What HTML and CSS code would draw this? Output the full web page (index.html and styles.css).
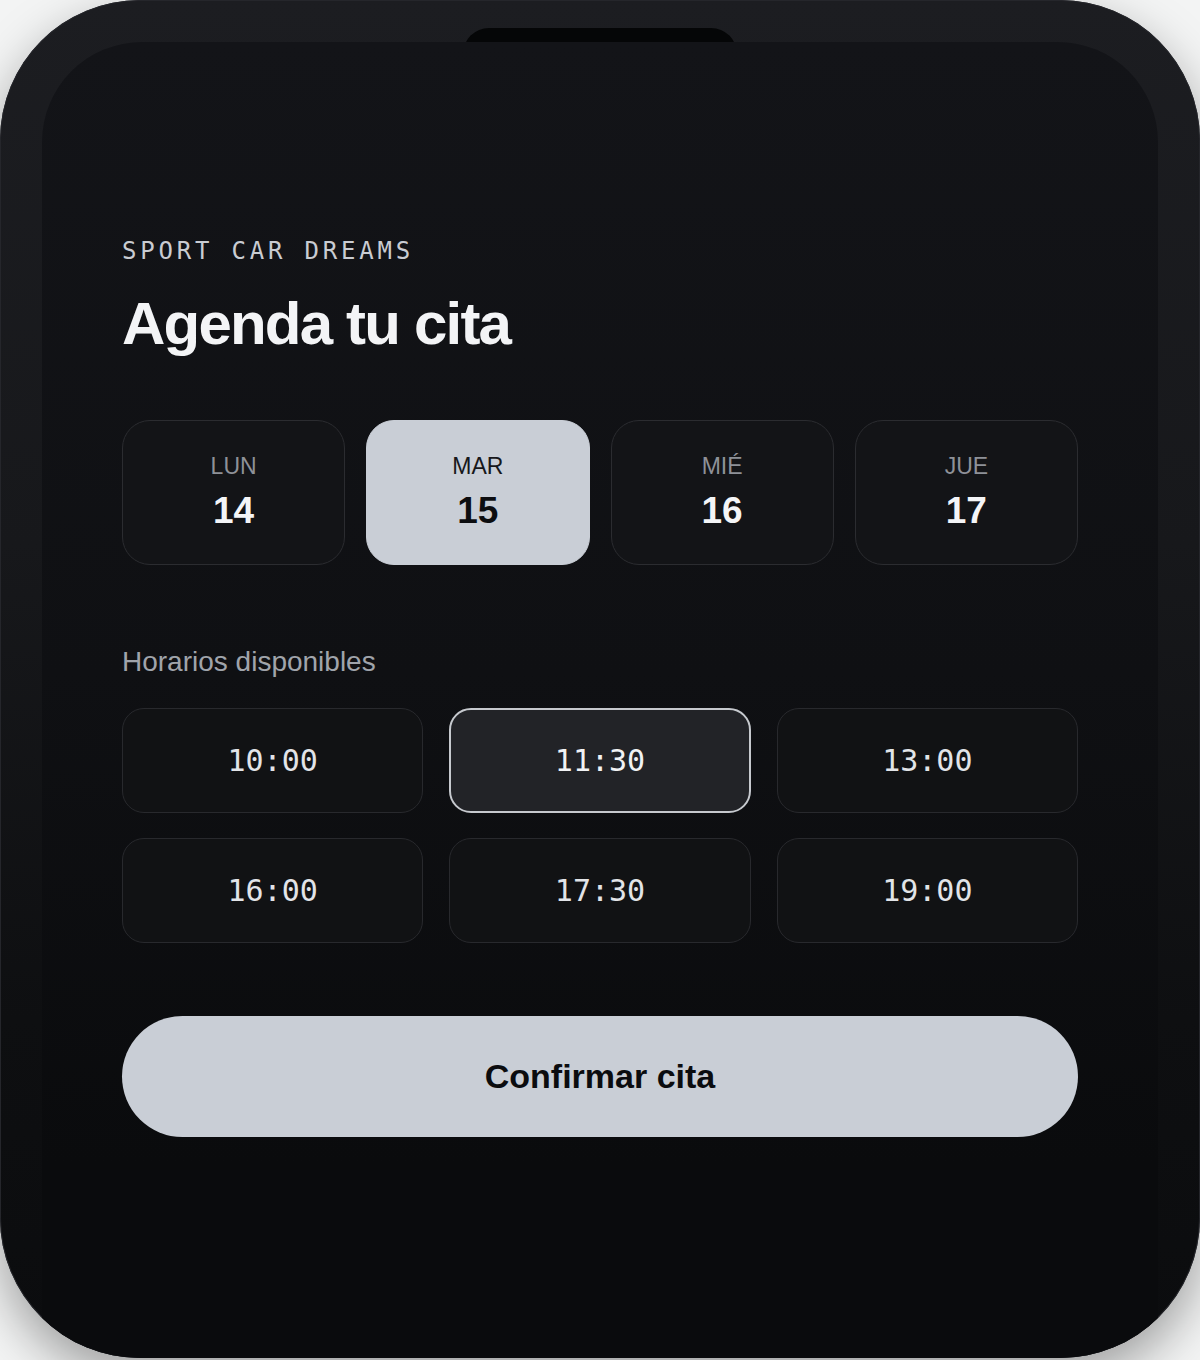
FILE: index.html
```html
<!DOCTYPE html>
<html lang="es">
<head>
<meta charset="utf-8">
<title>Sport Car Dreams - Agenda tu cita</title>
<link rel="stylesheet" href="styles.css">
</head>
<body>
<div class="phone">
  <div class="notch"></div>
  <div class="screen">
    <p class="brand">SPORT CAR DREAMS</p>
    <h1 class="title">Agenda tu cita</h1>

    <div class="dates">
      <button class="date"><span class="dow">LUN</span><span class="day">14</span></button>
      <button class="date is-active"><span class="dow">MAR</span><span class="day">15</span></button>
      <button class="date"><span class="dow">MIÉ</span><span class="day">16</span></button>
      <button class="date"><span class="dow">JUE</span><span class="day">17</span></button>
    </div>

    <p class="section-label">Horarios disponibles</p>

    <div class="slots">
      <button class="slot">10:00</button>
      <button class="slot is-active">11:30</button>
      <button class="slot">13:00</button>
      <button class="slot">16:00</button>
      <button class="slot">17:30</button>
      <button class="slot">19:00</button>
    </div>

    <button class="confirm">Confirmar cita</button>
  </div>
</div>
</body>
</html>
```

FILE: styles.css
```css
* {
  box-sizing: border-box;
}

html, body {
  margin: 0;
  padding: 0;
}

body {
  background: #f3f4f4;
  width: 1200px;
  height: 1360px;
  overflow: hidden;
  font-family: "Liberation Sans", Arial, sans-serif;
}

.phone {
  position: relative;
  width: 1200px;
  height: 1358px;
  padding: 42px 42px 0 42px;
  background: linear-gradient(180deg, #1c1d21 0%, #17181b 40%, #0e0f11 75%, #0b0c0e 100%);
  border-radius: 140px;
  overflow: hidden;
  box-shadow: 0 20px 50px rgba(0, 0, 0, 0.35), inset 0 0 0 1px #25262b;
}

.notch {
  position: absolute;
  top: 28px;
  left: 50%;
  width: 274px;
  height: 40px;
  margin-left: -137px;
  background: #050607;
  border-radius: 26px 26px 0 0;
  z-index: 0;
}

.screen {
  position: relative;
  z-index: 1;
  height: 1400px;
  padding: 0 80px;
  border-radius: 100px 100px 0 0;
  background: linear-gradient(180deg, #131418 0%, #0f1013 45%, #0a0b0d 80%, #0a0b0d 100%);
  display: flex;
  flex-direction: column;
}

.brand {
  margin: 195px 0 0 0;
  font-family: "DejaVu Sans Mono", "Liberation Mono", monospace;
  font-size: 24px;
  line-height: 29px;
  letter-spacing: 3.8px;
  color: #c9ccd2;
}

.title {
  margin: 25px 0 0 0;
  font-family: "Liberation Sans", Arial, sans-serif;
  font-weight: 700;
  font-size: 60px;
  line-height: 66px;
  letter-spacing: -1.8px;
  color: #f3f4f6;
}

.dates {
  margin-top: 63px;
  display: grid;
  grid-template-columns: repeat(4, 1fr);
  gap: 21px;
}

.date {
  height: 145px;
  border: 1px solid #2b2c30;
  border-radius: 28px;
  background: #131417;
  display: flex;
  flex-direction: column;
  align-items: center;
  justify-content: center;
  gap: 9px;
  padding: 0;
  font-family: "Liberation Sans", Arial, sans-serif;
}

.dow {
  font-size: 23px;
  line-height: 28px;
  color: #8e9198;
}

.day {
  font-size: 37px;
  line-height: 44px;
  font-weight: 700;
  color: #f4f5f7;
}

.date.is-active {
  background: #c9ced6;
  border-color: #c9ced6;
}

.date.is-active .dow {
  color: #17181b;
}

.date.is-active .day {
  color: #0c0d10;
}

.section-label {
  margin: 80px 0 0 0;
  font-size: 28px;
  line-height: 34px;
  color: #a0a4ab;
}

.slots {
  margin-top: 29px;
  display: grid;
  grid-template-columns: repeat(3, 1fr);
  column-gap: 26px;
  row-gap: 25px;
}

.slot {
  height: 105px;
  border: 1px solid #28292d;
  border-radius: 22px;
  background: #111214;
  color: #e2e4e8;
  font-family: "DejaVu Sans Mono", "Liberation Mono", monospace;
  font-size: 30px;
  padding: 0;
}

.slot.is-active {
  background: #222327;
  border: 2px solid #c6c9ce;
  color: #f1f2f4;
}

.confirm {
  margin-top: 73px;
  height: 121px;
  border: none;
  border-radius: 61px;
  background: #c9ced6;
  color: #0b0c0f;
  font-family: "Liberation Sans", Arial, sans-serif;
  font-weight: 700;
  font-size: 34px;
  padding: 0;
}
```
